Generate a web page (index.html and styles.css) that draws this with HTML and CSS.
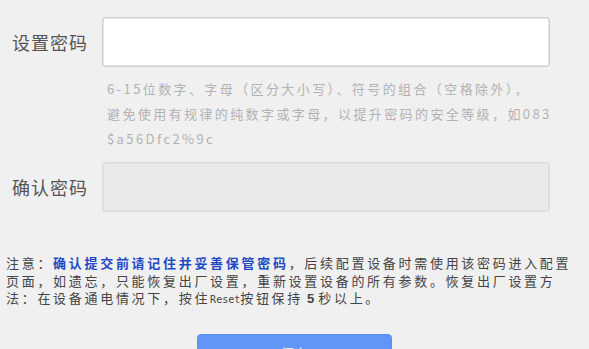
FILE: index.html
```html
<!DOCTYPE html>
<html lang="zh-CN">
<head>
<meta charset="utf-8">
<link rel="stylesheet" href="styles.css">
</head>
<body>
<div class="page">
  <div class="row row-first">
    <label class="label">设置密码</label>
    <div class="input"></div>
  </div>
  <div class="hint">6-15位数字、字母（区分大小写）、符号的组合（空格除外），<br>避免使用有规律的纯数字或字母，以提升密码的安全等级，如083<br>$a56Dfc2%9c</div>
  <div class="row row-second">
    <label class="label">确认密码</label>
    <div class="input input-disabled"></div>
  </div>
  <p class="note">注意：<span class="strong">确认提交前请记住并妥善保管密码</span>，后续配置设备时需使用该密码进入配置<br>页面，如遗忘，只能恢复出厂设置，重新设置设备的所有参数。恢复出厂设置方<br>法：在设备通电情况下，按住<span class="mono">Reset</span>按钮保持<b class="num">5</b>秒以上。</p>
  <div class="actions">
    <button class="btn">保存</button>
  </div>
</div>
</body>
</html>
```

FILE: styles.css
```css
html, body {
  margin: 0;
  padding: 0;
  background: #f0f0f0;
  overflow: hidden;
}
body {
  width: 589px;
  height: 349px;
  font-family: "Noto Sans CJK SC", "Noto Sans", sans-serif;
}
.page {
  display: flex;
  flex-direction: column;
}
.row {
  display: flex;
  align-items: center;
}
.row-first {
  padding-top: 17px;
}
.row-second {
  margin-top: 11px;
}
.label {
  width: 90px;
  padding-left: 12px;
  font-size: 18px;
  letter-spacing: 1px;
  color: #555;
  line-height: 20px;
}
.input {
  box-sizing: border-box;
  width: 448px;
  height: 50px;
  background: #fff;
  border: 1px solid #cfcfcf;
  border-radius: 3px;
  box-shadow: inset 0 0 0 1px #e6e6e6;
}
.input-disabled {
  background: #e9e9e9;
  border-color: #dcdcdc;
  box-shadow: inset 0 0 0 1px #e2e2e2;
}
.hint {
  margin: 9px 0 0 107px;
  font-size: 13px;
  letter-spacing: 2.4px;
  line-height: 25px;
  color: #b2b2b2;
}
.note {
  margin: 42px 0 0 6px;
  font-size: 13px;
  letter-spacing: 2.7px;
  line-height: 17.5px;
  color: #444;
}
.strong {
  color: #2449c6;
  font-weight: bold;
}
.mono {
  font-family: "DejaVu Sans Mono", monospace;
  font-size: 10px;
  letter-spacing: 0;
}
.num {
  font-family: "Liberation Sans", sans-serif;
  font-weight: bold;
  margin: 0 4px;
  letter-spacing: 0;
}
.actions {
  display: flex;
  padding-left: 197px;
  margin-top: 25px;
}
.btn {
  width: 195px;
  height: 40px;
  border: 1px solid #5a8ef0;
  border-radius: 4px;
  background: #5f96f7;
  color: #dfe9fd;
  font-family: "Noto Sans CJK SC", sans-serif;
  font-size: 15px;
  padding: 0;
}
```
